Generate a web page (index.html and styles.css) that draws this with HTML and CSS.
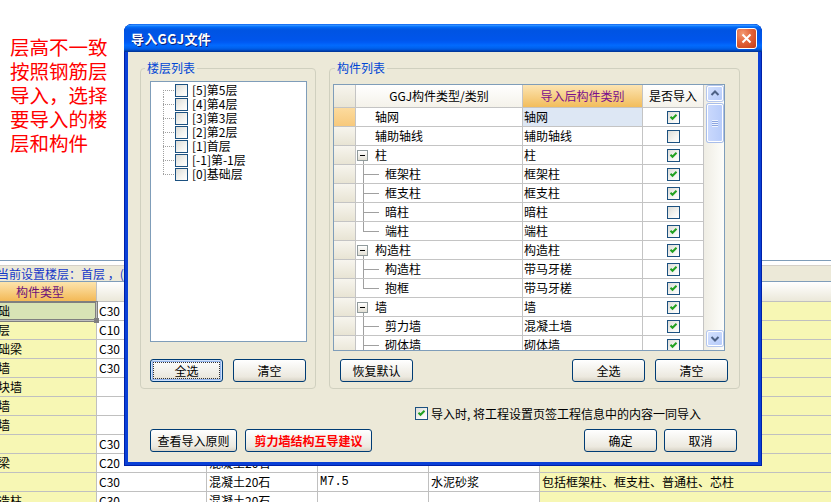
FILE: index.html
```html
<!DOCTYPE html>
<html lang="zh-CN">
<head>
<meta charset="utf-8">
<title>导入GGJ文件</title>
<link rel="stylesheet" href="styles.css">
</head>
<body>
<div class="page">
  <div class="note">层高不一致<br>按照钢筋层<br>导入，选择<br>要导入的楼<br>层和构件</div>
  <div class="floorbar-wrap"><div class="floorbar">当前设置楼层：首层 ，(层高：3.000m)</div></div>
  <div class="sheet">
    <div class="h hk">构件类型</div><div class="h"></div><div class="h"></div><div class="h"></div><div class="h"></div><div class="h"></div>

    <div class="c y sel">基础</div><div class="c">C30</div><div class="c"></div><div class="c"></div><div class="c"></div><div class="c y"></div>
    <div class="c y">垫层</div><div class="c">C10</div><div class="c"></div><div class="c"></div><div class="c"></div><div class="c y"></div>
    <div class="c y">基础梁</div><div class="c">C30</div><div class="c"></div><div class="c"></div><div class="c"></div><div class="c y"></div>
    <div class="c y">砼墙</div><div class="c">C30</div><div class="c"></div><div class="c"></div><div class="c"></div><div class="c y"></div>
    <div class="c y">砌块墙</div><div class="c"></div><div class="c"></div><div class="c"></div><div class="c"></div><div class="c y"></div>
    <div class="c y">砖墙</div><div class="c"></div><div class="c"></div><div class="c"></div><div class="c"></div><div class="c y"></div>
    <div class="c y">石墙</div><div class="c"></div><div class="c"></div><div class="c"></div><div class="c"></div><div class="c y"></div>
    <div class="c y">板</div><div class="c">C30</div><div class="c"></div><div class="c"></div><div class="c"></div><div class="c y"></div>
    <div class="c y">圈梁</div><div class="c">C20</div><div class="c">混凝土20石</div><div class="c"></div><div class="c"></div><div class="c y"></div>
    <div class="c y">柱</div><div class="c">C30</div><div class="c">混凝土20石</div><div class="c mono">M7.5</div><div class="c">水泥砂浆</div><div class="c y">包括框架柱、框支柱、普通柱、芯柱</div>
    <div class="c y">构造柱</div><div class="c">C30</div><div class="c">混凝土20石</div><div class="c"></div><div class="c"></div><div class="c y"></div>
  </div>
</div>

<div class="dialog">
  <div class="titlebar">
    <span class="title">导入GGJ文件</span>
    <span class="close"><svg width="13" height="13" viewBox="0 0 13 13"><path d="M2.5 2.5 L10.5 10.5 M10.5 2.5 L2.5 10.5" stroke="#fff" stroke-width="2" fill="none"/></svg></span>
  </div>
  <div class="dbody">
    <div class="groups">
      <fieldset class="grp grp-floor">
        <legend>楼层列表</legend>
        <div class="listbox">
          <div class="frow"><span class="dl first"></span><span class="cb"></span><span class="ft">[5]第5层</span></div>
          <div class="frow"><span class="dl"></span><span class="cb"></span><span class="ft">[4]第4层</span></div>
          <div class="frow"><span class="dl"></span><span class="cb"></span><span class="ft">[3]第3层</span></div>
          <div class="frow"><span class="dl"></span><span class="cb"></span><span class="ft">[2]第2层</span></div>
          <div class="frow"><span class="dl"></span><span class="cb"></span><span class="ft">[1]首层</span></div>
          <div class="frow"><span class="dl"></span><span class="cb"></span><span class="ft">[-1]第-1层</span></div>
          <div class="frow"><span class="dl last"></span><span class="cb"></span><span class="ft">[0]基础层</span></div>
        </div>
        <div class="btnrow">
          <button class="btn focus">全选</button>
          <button class="btn">清空</button>
        </div>
      </fieldset>

      <fieldset class="grp grp-comp">
        <legend>构件列表</legend>
        <div class="gwrap">
          <div class="grid">
            <div class="gh rh"></div><div class="gh">GGJ构件类型/类别</div><div class="gh ho">导入后构件类别</div><div class="gh">是否导入</div>

            <div class="g rh cur"></div><div class="g t lv0">轴网</div><div class="g v selb">轴网</div><div class="g k"><span class="cb"><svg width="11" height="11" viewBox="0 0 11 11"><path d="M2.5 4.8 L4.5 6.8 L8.5 2.8" fill="none" stroke="#21a121" stroke-width="2"/></svg></span></div>
            <div class="g rh"></div><div class="g t lv0">辅助轴线</div><div class="g v">辅助轴线</div><div class="g k"><span class="cb"></span></div>
            <div class="g rh"></div><div class="g t par"><span class="pm"></span>柱</div><div class="g v">柱</div><div class="g k"><span class="cb"><svg width="11" height="11" viewBox="0 0 11 11"><path d="M2.5 4.8 L4.5 6.8 L8.5 2.8" fill="none" stroke="#21a121" stroke-width="2"/></svg></span></div>
            <div class="g rh"></div><div class="g t"><span class="tl"></span>框架柱</div><div class="g v">框架柱</div><div class="g k"><span class="cb"><svg width="11" height="11" viewBox="0 0 11 11"><path d="M2.5 4.8 L4.5 6.8 L8.5 2.8" fill="none" stroke="#21a121" stroke-width="2"/></svg></span></div>
            <div class="g rh"></div><div class="g t"><span class="tl"></span>框支柱</div><div class="g v">框支柱</div><div class="g k"><span class="cb"><svg width="11" height="11" viewBox="0 0 11 11"><path d="M2.5 4.8 L4.5 6.8 L8.5 2.8" fill="none" stroke="#21a121" stroke-width="2"/></svg></span></div>
            <div class="g rh"></div><div class="g t"><span class="tl"></span>暗柱</div><div class="g v">暗柱</div><div class="g k"><span class="cb"></span></div>
            <div class="g rh"></div><div class="g t"><span class="tl last"></span>端柱</div><div class="g v">端柱</div><div class="g k"><span class="cb"><svg width="11" height="11" viewBox="0 0 11 11"><path d="M2.5 4.8 L4.5 6.8 L8.5 2.8" fill="none" stroke="#21a121" stroke-width="2"/></svg></span></div>
            <div class="g rh"></div><div class="g t par"><span class="pm"></span>构造柱</div><div class="g v">构造柱</div><div class="g k"><span class="cb"><svg width="11" height="11" viewBox="0 0 11 11"><path d="M2.5 4.8 L4.5 6.8 L8.5 2.8" fill="none" stroke="#21a121" stroke-width="2"/></svg></span></div>
            <div class="g rh"></div><div class="g t"><span class="tl"></span>构造柱</div><div class="g v">带马牙槎</div><div class="g k"><span class="cb"><svg width="11" height="11" viewBox="0 0 11 11"><path d="M2.5 4.8 L4.5 6.8 L8.5 2.8" fill="none" stroke="#21a121" stroke-width="2"/></svg></span></div>
            <div class="g rh"></div><div class="g t"><span class="tl last"></span>抱框</div><div class="g v">带马牙槎</div><div class="g k"><span class="cb"><svg width="11" height="11" viewBox="0 0 11 11"><path d="M2.5 4.8 L4.5 6.8 L8.5 2.8" fill="none" stroke="#21a121" stroke-width="2"/></svg></span></div>
            <div class="g rh"></div><div class="g t par"><span class="pm"></span>墙</div><div class="g v">墙</div><div class="g k"><span class="cb"><svg width="11" height="11" viewBox="0 0 11 11"><path d="M2.5 4.8 L4.5 6.8 L8.5 2.8" fill="none" stroke="#21a121" stroke-width="2"/></svg></span></div>
            <div class="g rh"></div><div class="g t"><span class="tl"></span>剪力墙</div><div class="g v">混凝土墙</div><div class="g k"><span class="cb"><svg width="11" height="11" viewBox="0 0 11 11"><path d="M2.5 4.8 L4.5 6.8 L8.5 2.8" fill="none" stroke="#21a121" stroke-width="2"/></svg></span></div>
            <div class="g rh"></div><div class="g t"><span class="tl"></span>砌体墙</div><div class="g v">砌体墙</div><div class="g k"><span class="cb"><svg width="11" height="11" viewBox="0 0 11 11"><path d="M2.5 4.8 L4.5 6.8 L8.5 2.8" fill="none" stroke="#21a121" stroke-width="2"/></svg></span></div>
          </div>
          <div class="vs">
            <span class="sb"><svg width="14" height="13" viewBox="0 0 14 13"><path d="M3.5 8 L7 4.5 L10.5 8" fill="none" stroke="#4d6185" stroke-width="2"/></svg></span>
            <span class="thumb"><span class="grip"></span></span>
            <span class="sb down"><svg width="14" height="13" viewBox="0 0 14 13"><path d="M3.5 5 L7 8.5 L10.5 5" fill="none" stroke="#4d6185" stroke-width="2"/></svg></span>
          </div>
        </div>
        <div class="btnrow2">
          <button class="btn">恢复默认</button>
          <span class="spacer"></span>
          <button class="btn">全选</button>
          <button class="btn">清空</button>
        </div>
      </fieldset>
    </div>

    <label class="opt"><span class="cb"><svg width="11" height="11" viewBox="0 0 11 11"><path d="M2.5 4.8 L4.5 6.8 L8.5 2.8" fill="none" stroke="#21a121" stroke-width="2"/></svg></span><span>导入时, 将工程设置页签工程信息中的内容一同导入</span></label>

    <div class="foot">
      <button class="btn wide">查看导入原则</button>
      <button class="btn red">剪力墙结构互导建议</button>
      <span class="spacer"></span>
      <button class="btn">确定</button>
      <button class="btn">取消</button>
    </div>
  </div>
</div>
</body>
</html>
```

FILE: styles.css
```css
* { box-sizing: border-box; }

body {
  margin: 0;
  width: 831px;
  height: 502px;
  overflow: hidden;
  position: relative;
  background: #fff;
  font-family: "Noto Sans CJK SC", "Noto Sans", sans-serif;
  font-size: 12px;
  color: #000;
}

/* ---------- background page ---------- */
.note {
  height: 260px;
  padding: 35px 0 0 10px;
  color: #ff0000;
  font-size: 19.5px;
  line-height: 24px;
}

.floorbar-wrap {
  border-top: 1px solid #7f9db9;
  padding-top: 4px;
}

.floorbar {
  border-top: 1px solid #d4d0c8;
  background: #ece9d8;
  height: 16px;
  line-height: 16px;
  color: #1538c8;
  text-indent: -3px;
  white-space: nowrap;
  overflow: hidden;
}

.sheet {
  border-top: 1px solid #7f9db9;
  display: grid;
  grid-template-columns: 113px 110px 111px 111px 111px 307px;
  margin-left: -16px;
}

.sheet .h {
  height: 20px;
  line-height: 19px;
  text-align: center;
  border-right: 1px solid #c0c0c0;
  border-bottom: 1px solid #c0c0c0;
  background: linear-gradient(#ffffff, #ebe8d9);
}

.sheet .h.hk {
  background: linear-gradient(#fde4ad, #f3b956);
  color: #6c1078;
}

.sheet .c {
  height: 19px;
  line-height: 18px;
  padding-left: 2px;
  white-space: nowrap;
  overflow: hidden;
  border-right: 1px solid #c0c0c0;
  border-bottom: 1px solid #c0c0c0;
  background: #fff;
}

.sheet .c.y { background: #f7f7b4; }

.sheet .c.sel {
  position: relative;
  z-index: 1;
  overflow: visible;
  background: #d8e3b5;
  box-shadow: 0 0 0 1px #7f7f7f, inset 0 0 0 1px #7f7f7f;
}

.sheet .c.sel::after {
  content: "";
  position: absolute;
  right: -3px;
  bottom: -3px;
  width: 5px;
  height: 5px;
  background: #7f7f7f;
}

.sheet .c.mono { font-family: "Liberation Mono", monospace; }

/* ---------- dialog ---------- */
.dialog {
  position: absolute;
  left: 124px;
  top: 24px;
  width: 638px;
  height: 442px;
  display: flex;
  flex-direction: column;
  background: #0a40d6;
  border-radius: 8px 8px 0 0;
  box-shadow: inset 0 0 0 1px #0020a8;
}

.titlebar {
  height: 28px;
  flex: none;
  display: flex;
  align-items: center;
  padding: 0 5px 0 7px;
  border-radius: 8px 8px 0 0;
  background: linear-gradient(#0058ee 0%, #3a93ff 4%, #288eff 6%, #127dff 8%, #036ffc 10%, #0262ee 14%, #0057e5 20%, #0054e3 24%, #0055eb 56%, #005bf5 66%, #026afe 76%, #0062ef 86%, #0052d6 92%, #0040ab 96%, #003092 100%);
}

.title {
  flex: 1;
  color: #fff;
  font-weight: bold;
  font-size: 13px;
  letter-spacing: 0.3px;
  text-shadow: 1px 1px 0 #0a1e78;
}

.close {
  width: 21px;
  height: 21px;
  display: flex;
  align-items: center;
  justify-content: center;
  border: 1px solid #fff;
  border-radius: 3px;
  background: radial-gradient(circle at 30% 25%, #f39a72 0%, #e2623a 45%, #c73a14 100%);
}

.dbody {
  flex: 1;
  margin: 0 4px 4px;
  background: #ece9d8;
  padding-top: 9px;
  display: flex;
  flex-direction: column;
}

.groups {
  display: flex;
  padding: 0 18px 0 12px;
  gap: 13px;
}

.grp {
  margin: 0;
  min-width: 0;
  border: 1px solid #d0d0bf;
  border-radius: 4px;
}

.grp legend {
  color: #0046d5;
  font-size: 12px;
  line-height: 14px;
  padding: 0 2px;
}

.grp-floor {
  width: 176px;
  padding: 6px 8px 6px 9px;
}

.grp-floor legend { margin-left: -5px; }

.grp-comp {
  width: 411px;
  padding: 9px 14px 6px 3px;
}

.grp-comp legend { margin-left: 2px; }

/* floor list */
.listbox {
  height: 261px;
  border: 1px solid #7f9db9;
  background: #fff;
  padding-top: 1px;
}

.frow {
  height: 14px;
  display: flex;
  align-items: center;
}

.dl {
  width: 12px;
  height: 14px;
  margin-left: 12px;
  background:
    repeating-linear-gradient(to bottom, #a0a0a0 0 1px, transparent 1px 2px) 0 0 / 1px 100% no-repeat,
    repeating-linear-gradient(to right, #a0a0a0 0 1px, transparent 1px 2px) 0 7px / 100% 1px no-repeat;
}

.dl.first {
  background:
    repeating-linear-gradient(to bottom, #a0a0a0 0 1px, transparent 1px 2px) 0 7px / 1px 7px no-repeat,
    repeating-linear-gradient(to right, #a0a0a0 0 1px, transparent 1px 2px) 0 7px / 100% 1px no-repeat;
}

.dl.last {
  background:
    repeating-linear-gradient(to bottom, #a0a0a0 0 1px, transparent 1px 2px) 0 0 / 1px 8px no-repeat,
    repeating-linear-gradient(to right, #a0a0a0 0 1px, transparent 1px 2px) 0 7px / 100% 1px no-repeat;
}

.ft {
  margin-left: 4px;
  white-space: nowrap;
  line-height: 14px;
}

/* checkbox */
.cb {
  flex: none;
  display: inline-flex;
  align-items: center;
  justify-content: center;
  width: 13px;
  height: 13px;
  border: 1px solid #1c5180;
  background: linear-gradient(135deg, #dcdcd7 0%, #f4f4f1 60%, #ffffff 100%);
}

/* buttons */
.btn {
  height: 23px;
  width: 73px;
  padding: 0;
  border: 1px solid #003c74;
  border-radius: 3px;
  background: linear-gradient(#ffffff 0%, #f6f5f1 35%, #ece9df 80%, #d8d3c6 100%);
  font-family: inherit;
  font-size: 12px;
  color: #000;
  line-height: 20px;
}

.btn.focus {
  box-shadow: inset 0 0 0 1px #cde0fb, inset 0 0 0 2px #94b4ea;
  outline: 1px dotted #333;
  outline-offset: -4px;
}

.btnrow {
  display: flex;
  gap: 10px;
  margin-top: 17px;
}

.btnrow2 {
  display: flex;
  gap: 10px;
  margin-top: 8px;
  padding-left: 7px;
  margin-right: -3px;
}

.spacer { flex: 1; }

/* component grid */
.gwrap {
  display: flex;
  height: 267px;
  border: 1px solid #7f9db9;
  background: #fff;
  overflow: hidden;
}

.grid {
  width: 370px;
  flex: none;
  display: grid;
  grid-template-columns: 22px 167px 120px 61px;
  grid-template-rows: 23px;
  grid-auto-rows: 19px;
  align-content: start;
}

.gh {
  border-right: 1px solid #c4c4c4;
  border-bottom: 1px solid #c4c4c4;
  text-align: center;
  line-height: 22px;
  white-space: nowrap;
  background: linear-gradient(#ffffff, #f4f2ea);
}

.gh.rh { background: linear-gradient(#f7f5ee, #e9e5d5); }

.gh.ho {
  background: linear-gradient(#fce4b2, #f2bd5c);
  color: #7a0f8c;
}

.g {
  border-right: 1px solid #c4c4c4;
  border-bottom: 1px solid #c4c4c4;
  line-height: 18px;
  white-space: nowrap;
  overflow: hidden;
}

.g.rh { background: linear-gradient(#f7f5ee, #e8e4d4); }
.g.rh.cur { background: linear-gradient(#fcdb9e, #f7c97c); }

.g.t {
  display: flex;
  align-items: center;
}

.g.lv0 { padding-left: 19px; }

.g.par {
  background: linear-gradient(#a0a0a0, #a0a0a0) 7px 100% / 1px 4px no-repeat;
}

.pm {
  flex: none;
  width: 11px;
  height: 11px;
  margin-left: 1px;
  margin-right: 7px;
  border: 1px solid #919b9c;
  background:
    linear-gradient(#000, #000) center / 5px 1px no-repeat,
    linear-gradient(#ffffff, #e3e0d5);
}

.tl {
  flex: none;
  align-self: stretch;
  width: 16px;
  margin-left: 7px;
  margin-right: 6px;
  background:
    linear-gradient(#a0a0a0, #a0a0a0) 0 0 / 1px 100% no-repeat,
    linear-gradient(#a0a0a0, #a0a0a0) 0 9px / 100% 1px no-repeat;
}

.tl.last {
  background:
    linear-gradient(#a0a0a0, #a0a0a0) 0 0 / 1px 10px no-repeat,
    linear-gradient(#a0a0a0, #a0a0a0) 0 9px / 100% 1px no-repeat;
}

.g.v { padding-left: 1px; }
.g.v.selb { background: #dde7f4; }

.g.k {
  display: flex;
  align-items: center;
  justify-content: center;
  padding-left: 1px;
}

/* scrollbar */
.vs {
  width: 20px;
  flex: none;
  display: flex;
  flex-direction: column;
  padding: 1px 1px 4px 3px;
  background: linear-gradient(to right, #efede4, #fdfdfa);
}

.sb {
  height: 15px;
  width: 16px;
  display: flex;
  align-items: center;
  justify-content: center;
  border: 1px solid #fff;
  border-radius: 2px;
  background: linear-gradient(135deg, #d3e0fd, #b6cbfa);
  box-shadow: 0 0 0 1px #b4c6ee;
}

.sb.down { margin-top: auto; }

.thumb {
  height: 38px;
  width: 16px;
  margin-top: 3px;
  display: flex;
  align-items: center;
  justify-content: center;
  border: 1px solid #fff;
  border-radius: 2px;
  background: linear-gradient(to right, #c9d8fc, #b8ccfa);
  box-shadow: 0 0 0 1px #a8bdea;
}

.grip {
  width: 6px;
  height: 7px;
  background: repeating-linear-gradient(to bottom, #eef3fe 0 1px, #8ca5e0 1px 2px);
}

/* option + footer */
.opt {
  display: flex;
  align-items: center;
  gap: 3px;
  height: 17px;
  margin-top: 16px;
  padding-left: 287px;
  white-space: nowrap;
}

.foot {
  display: flex;
  align-items: center;
  gap: 8px;
  margin-top: 7px;
  padding: 0 21px 0 22px;
}

.foot .btn.wide { width: 87px; }

.foot .btn.red {
  width: 127px;
  color: #ff0000;
  font-weight: bold;
}

.foot .btn + .btn:last-child { margin-left: -1px; }
```
